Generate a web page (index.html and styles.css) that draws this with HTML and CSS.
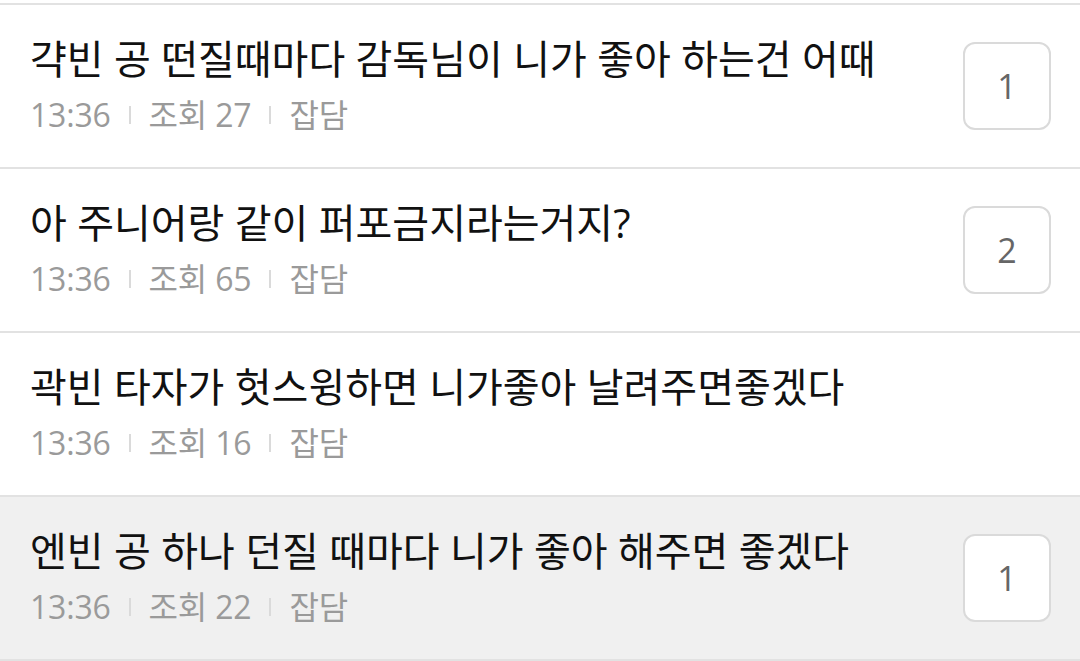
FILE: index.html
```html
<!DOCTYPE html>
<html lang="ko">
<head>
    <meta charset="utf-8">
    <title>게시판</title>
    <link rel="stylesheet" href="styles.css">
</head>
<body>
    <ul class="PostList">
        <li class="PostItem">
            <div class="PostText">
                <p class="PostTitle">갹빈 공 떤질때마다 감독님이 니가 좋아 하는건 어때</p>
                <p class="PostMeta"><span>13:36</span><span class="Sep"></span><span>조회 27</span><span class="Sep"></span><span>잡담</span></p>
            </div>
            <div class="CommentBox">1</div>
        </li>
        <li class="PostItem">
            <div class="PostText">
                <p class="PostTitle">아 주니어랑 같이 퍼포금지라는거지?</p>
                <p class="PostMeta"><span>13:36</span><span class="Sep"></span><span>조회 65</span><span class="Sep"></span><span>잡담</span></p>
            </div>
            <div class="CommentBox">2</div>
        </li>
        <li class="PostItem">
            <div class="PostText">
                <p class="PostTitle">곽빈 타자가 헛스윙하면 니가좋아 날려주면좋겠다</p>
                <p class="PostMeta"><span>13:36</span><span class="Sep"></span><span>조회 16</span><span class="Sep"></span><span>잡담</span></p>
            </div>
        </li>
        <li class="PostItem Visited">
            <div class="PostText">
                <p class="PostTitle">엔빈 공 하나 던질 때마다 니가 좋아 해주면 좋겠다</p>
                <p class="PostMeta"><span>13:36</span><span class="Sep"></span><span>조회 22</span><span class="Sep"></span><span>잡담</span></p>
            </div>
            <div class="CommentBox">1</div>
        </li>
    </ul>
</body>
</html>
```

FILE: styles.css
```css
body {
    margin: 0;
    background: #ffffff;
    font-family: "Open Sans", "Noto Sans CJK KR", sans-serif;
}

.PostList {
    list-style: none;
    margin: 0;
    padding: 0;
    padding-top: 3px;
}

.PostItem {
    display: flex;
    align-items: center;
    height: 162px;
    padding: 0 29px 0 30px;
    border-top: 2px solid #e2e2e2;
}

.PostItem:last-child {
    border-bottom: 2px solid #e2e2e2;
}

.PostItem.Visited {
    background: #f0f0f0;
}

.PostText {
    flex: 1;
    margin-top: -3px;
}

p {
    margin: 0;
}

.PostTitle {
    font-size: 40px;
    line-height: 46px;
    color: #111111;
}

.PostMeta {
    display: flex;
    align-items: center;
    margin-top: 14px;
    font-size: 32px;
    line-height: 38px;
    color: #9a9a9a;
    letter-spacing: -0.2px;
}

.Sep {
    width: 2px;
    height: 18px;
    margin: 0 18px;
    background: #dadada;
}

.CommentBox {
    width: 84px;
    height: 84px;
    border: 2px solid #dadada;
    border-radius: 12px;
    background: #ffffff;
    display: flex;
    align-items: center;
    justify-content: center;
    font-size: 34px;
    color: #666666;
}
```
